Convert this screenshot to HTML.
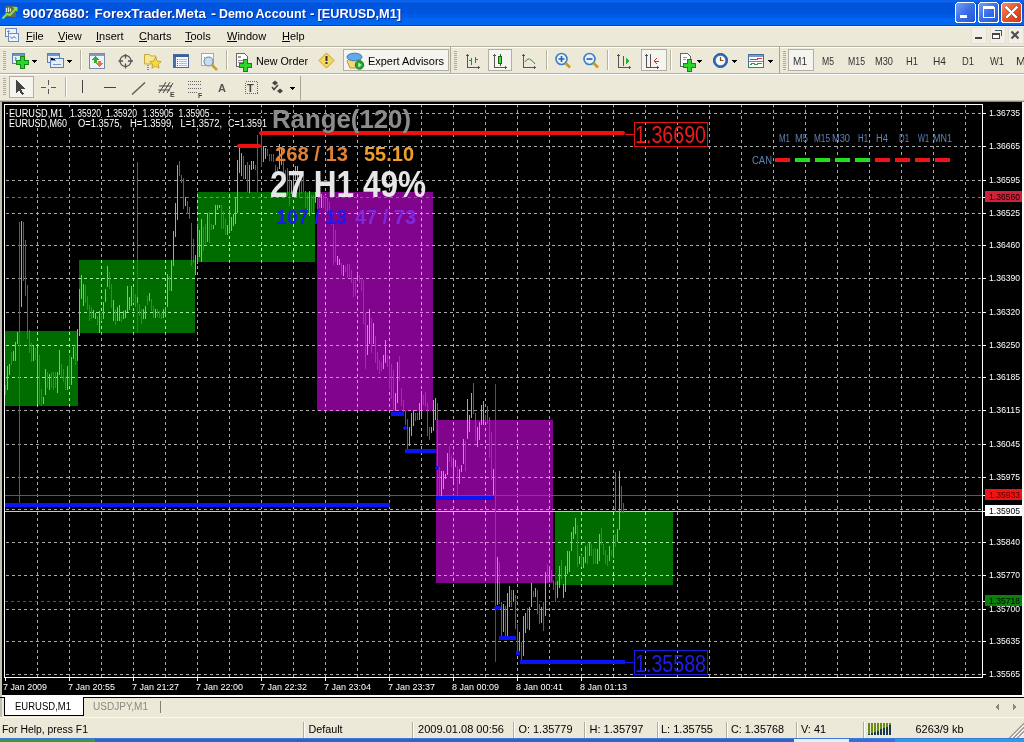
<!DOCTYPE html><html><head><meta charset="utf-8"><style>
html,body{margin:0;padding:0;width:1024px;height:742px;overflow:hidden;background:#ECE9D8}
svg{display:block;will-change:transform} text{font-family:"Liberation Sans",sans-serif}
</style></head><body><svg width="1024" height="742" viewBox="0 0 1024 742" shape-rendering="crispEdges">
<rect x="0" y="0" width="1024" height="742" fill="#ECE9D8" />
<defs>
<linearGradient id="tb" x1="0" y1="0" x2="0" y2="1">
<stop offset="0" stop-color="#0997FF"/><stop offset="0.12" stop-color="#0053EE"/>
<stop offset="0.5" stop-color="#0050EE"/><stop offset="0.85" stop-color="#0062F7"/>
<stop offset="1" stop-color="#0046C8"/></linearGradient>
<linearGradient id="btnb" x1="0" y1="0" x2="1" y2="1">
<stop offset="0" stop-color="#7BA4F5"/><stop offset="0.5" stop-color="#3A6EE8"/><stop offset="1" stop-color="#2456D4"/></linearGradient>
<linearGradient id="btnr" x1="0" y1="0" x2="1" y2="1">
<stop offset="0" stop-color="#F3926E"/><stop offset="0.5" stop-color="#E5542C"/><stop offset="1" stop-color="#C63A17"/></linearGradient>
</defs>
<rect x="0" y="0" width="1024" height="2" fill="#0A64EC" />
<rect x="0" y="2" width="1024" height="1" fill="#085CE4" />
<rect x="0" y="3" width="1024" height="11" fill="#0054DC" />
<rect x="0" y="14" width="1024" height="4" fill="#005CE8" />
<rect x="0" y="18" width="1024" height="7" fill="#0066F0" />
<rect x="0" y="25" width="1024" height="1" fill="#0040B8" />
<rect x="0" y="26" width="1024" height="1" fill="#F4F4FC" />
<g shape-rendering="auto"><rect x="5" y="6" width="11" height="11" fill="#6A7040" opacity="0.85"/><path d="M6.5 8v4 M8.5 7.5v4.5 M10.5 8.5v3" stroke="#E8E8D8" stroke-width="1.2"/><path d="M2.5 18.5 L7 14 L10 15 L16 8.5" stroke="#8CE03A" stroke-width="2" fill="none"/><path d="M12.5 7 L17.5 7 L17.5 12z" fill="#8CE03A"/></g>
<text x="23.5" y="19" font-size="13" fill="#0A2A9A" font-weight="bold" textLength="67.0" lengthAdjust="spacingAndGlyphs" >90078680:</text>
<text x="22.5" y="18" font-size="13" fill="#FFFFFF" font-weight="bold" textLength="67.0" lengthAdjust="spacingAndGlyphs" >90078680:</text>
<text x="95.5" y="19" font-size="13" fill="#0A2A9A" font-weight="bold" textLength="111.5" lengthAdjust="spacingAndGlyphs" >ForexTrader.Meta</text>
<text x="94.5" y="18" font-size="13" fill="#FFFFFF" font-weight="bold" textLength="111.5" lengthAdjust="spacingAndGlyphs" >ForexTrader.Meta</text>
<text x="212" y="19" font-size="13" fill="#0A2A9A" font-weight="bold" textLength="5" lengthAdjust="spacingAndGlyphs" >-</text>
<text x="211" y="18" font-size="13" fill="#FFFFFF" font-weight="bold" textLength="5" lengthAdjust="spacingAndGlyphs" >-</text>
<text x="220" y="19" font-size="13" fill="#0A2A9A" font-weight="bold" textLength="34.5" lengthAdjust="spacingAndGlyphs" >Demo</text>
<text x="219" y="18" font-size="13" fill="#FFFFFF" font-weight="bold" textLength="34.5" lengthAdjust="spacingAndGlyphs" >Demo</text>
<text x="256.5" y="19" font-size="13" fill="#0A2A9A" font-weight="bold" textLength="50.5" lengthAdjust="spacingAndGlyphs" >Account</text>
<text x="255.5" y="18" font-size="13" fill="#FFFFFF" font-weight="bold" textLength="50.5" lengthAdjust="spacingAndGlyphs" >Account</text>
<text x="311" y="19" font-size="13" fill="#0A2A9A" font-weight="bold" textLength="4.5" lengthAdjust="spacingAndGlyphs" >-</text>
<text x="310" y="18" font-size="13" fill="#FFFFFF" font-weight="bold" textLength="4.5" lengthAdjust="spacingAndGlyphs" >-</text>
<text x="318.5" y="19" font-size="13" fill="#0A2A9A" font-weight="bold" textLength="83.5" lengthAdjust="spacingAndGlyphs" >[EURUSD,M1]</text>
<text x="317.5" y="18" font-size="13" fill="#FFFFFF" font-weight="bold" textLength="83.5" lengthAdjust="spacingAndGlyphs" >[EURUSD,M1]</text>
<rect x="955.5" y="2.5" width="20" height="20" rx="3" fill="url(#btnb)" stroke="#FFFFFF" stroke-width="1"/>
<rect x="978.5" y="2.5" width="20" height="20" rx="3" fill="url(#btnb)" stroke="#FFFFFF" stroke-width="1"/>
<rect x="1001.5" y="2.5" width="20" height="20" rx="3" fill="url(#btnr)" stroke="#FFFFFF" stroke-width="1"/>
<rect x="960" y="15" width="7" height="3" fill="#fff"/>
<rect x="983" y="7" width="11" height="10" fill="none" stroke="#fff" stroke-width="1"/><rect x="983" y="6" width="11" height="3" fill="#fff"/>
<path d="M1006 7 L1017 18 M1017 7 L1006 18" stroke="#fff" stroke-width="2.2"/>
<g><rect x="5.5" y="28.5" width="11" height="8" fill="#EEF4FC" stroke="#6B8CC2"/><rect x="8.5" y="33.5" width="10" height="8" fill="#EEF4FC" stroke="#6B8CC2"/><path d="M10 36.5 l2 2 l2 -2 l2 2" stroke="#4A6AA2" fill="none" shape-rendering="auto"/><path d="M7 31.5 h3 M8 30 v3" stroke="#7A94C0"/></g>
<text x="26" y="40" font-size="11" fill="#000" font-weight="normal" >File</text>
<text x="58" y="40" font-size="11" fill="#000" font-weight="normal" >View</text>
<text x="96" y="40" font-size="11" fill="#000" font-weight="normal" >Insert</text>
<text x="139" y="40" font-size="11" fill="#000" font-weight="normal" >Charts</text>
<text x="185" y="40" font-size="11" fill="#000" font-weight="normal" >Tools</text>
<text x="227" y="40" font-size="11" fill="#000" font-weight="normal" >Window</text>
<text x="282" y="40" font-size="11" fill="#000" font-weight="normal" >Help</text>
<rect x="26" y="41" width="7" height="1" fill="#000" />
<rect x="58" y="41" width="7" height="1" fill="#000" />
<rect x="96" y="41" width="5" height="1" fill="#000" />
<rect x="139" y="41" width="8" height="1" fill="#000" />
<rect x="185" y="41" width="7" height="1" fill="#000" />
<rect x="227" y="41" width="10" height="1" fill="#000" />
<rect x="282" y="41" width="8" height="1" fill="#000" />
<rect x="971.5" y="27.5" width="15" height="16" fill="#F1EFE6" stroke="#E4E1D2"/>
<rect x="990.5" y="27.5" width="15" height="16" fill="#F1EFE6" stroke="#E4E1D2"/>
<rect x="1008.5" y="27.5" width="15" height="16" fill="#F1EFE6" stroke="#E4E1D2"/>
<rect x="975" y="37" width="7" height="2" fill="#444"/>
<path d="M994.5 30.5h7v5" stroke="#3A5A6A" fill="none" stroke-width="1.2"/><rect x="992.5" y="33.5" width="7" height="5" fill="#FFF" stroke="#444"/><rect x="992" y="33" width="8" height="2" fill="#444"/>
<path d="M1011.5 31.5 l7 7 M1018.5 31.5 l-7 7" stroke="#505050" stroke-width="2.2" shape-rendering="auto"/>
<rect x="0" y="46" width="1024" height="1" fill="#B5B2A4" />
<rect x="0" y="47" width="1024" height="1" fill="#FFFFFF" />
<rect x="0" y="73" width="1024" height="1" fill="#B5B2A4" />
<rect x="0" y="74" width="1024" height="1" fill="#FFFFFF" />
<rect x="0" y="100" width="1024" height="1" fill="#C8C5B6" />
<rect x="0" y="101" width="1024" height="1" fill="#8C8A7E" />
<rect x="3" y="51" width="3" height="1" fill="#B0AC9C" />
<rect x="3" y="53" width="3" height="1" fill="#B0AC9C" />
<rect x="3" y="55" width="3" height="1" fill="#B0AC9C" />
<rect x="3" y="57" width="3" height="1" fill="#B0AC9C" />
<rect x="3" y="59" width="3" height="1" fill="#B0AC9C" />
<rect x="3" y="61" width="3" height="1" fill="#B0AC9C" />
<rect x="3" y="63" width="3" height="1" fill="#B0AC9C" />
<rect x="3" y="65" width="3" height="1" fill="#B0AC9C" />
<rect x="3" y="67" width="3" height="1" fill="#B0AC9C" />
<rect x="3" y="69" width="3" height="1" fill="#B0AC9C" />
<g><rect x="12.5" y="53.5" width="12" height="10" fill="#E6EEF8" stroke="#5A7FB8"/><rect x="13" y="54" width="11" height="2" fill="#6F93C8"/><path d="M15.5 57 v4 M14.5 58 h2" stroke="#7A94C0"/></g><path d="M20.5 56.5 h4 v4 h4 v4 h-4 v4 h-4 v-4 h-4 v-4 h4 z" fill="#2FD22F" stroke="#118A11"/>
<path d="M32 60 h5 l-2.5 3 z" fill="#000"/>
<g><rect x="47.5" y="53.5" width="12" height="9" fill="#E6EEF8" stroke="#5A7FB8"/><rect x="48" y="54" width="11" height="2" fill="#6F93C8"/><rect x="50.5" y="58.5" width="13" height="9" fill="#E6EEF8" stroke="#5A7FB8"/><path d="M50 57 v3 h6 M53 64 h8" stroke="#7A94C0"/></g>
<path d="M67 60 h5 l-2.5 3 z" fill="#000"/>
<rect x="80" y="50" width="1" height="20" fill="#B5B2A4" />
<rect x="81" y="50" width="1" height="20" fill="#FFFFFF" />
<g><rect x="89.5" y="53.5" width="15" height="15" fill="#EEF3FA" stroke="#7A8AA8"/><rect x="90" y="54" width="14" height="2" fill="#8A9AB8"/><path d="M95 56 l4 4 h-2.5 v2.5 h-3 v-2.5 h-2.5 z" fill="#2FAF2F"/><path d="M99 67 l4 -4 h-2.5 v-2.5 h-3 v2.5 h-2.5 z" fill="#E8743A"/></g>
<g stroke="#555" fill="none" stroke-width="1.3" shape-rendering="auto"><circle cx="125.5" cy="61" r="5.5"/><path d="M125.5 54 v4.5 M125.5 63.5 v5 M118.5 61 h4.5 M128 61 h5"/></g>
<g shape-rendering="auto"><path d="M144.5 54.5 h5 l1.5 1.5 h5 v8 h-11.5 z" fill="#F7E690" stroke="#C9A640"/><path d="M155.5 57.5 l1.8 3.6 3.9 .5 -2.9 2.7 .8 3.9 -3.6 -2 -3.6 2 .8 -3.9 -2.9 -2.7 3.9 -.5z" fill="#F7DA40" stroke="#B89A20" stroke-width=".8"/><path d="M148 65 v5" stroke="#333" stroke-dasharray="1 1"/></g>
<g><rect x="173.5" y="54.5" width="15" height="13" fill="#F6F9FF" stroke="#4A6A9A"/><rect x="174" y="55" width="14" height="2" fill="#3A5F9F"/><rect x="174" y="57" width="2" height="10" fill="#4A6FAF"/><path d="M177 59h1M177 61h1M177 63h1M177 65h1" stroke="#C03030"/><path d="M179 59h8M179 61h8M179 63h8M179 65h8" stroke="#A8C0E8"/></g>
<g shape-rendering="auto"><rect x="201.5" y="53.5" width="12" height="12" fill="#FFFFFF" stroke="#A8A8A8"/><path d="M204 57 l3 3 3 -3" stroke="#7090B0" fill="none"/><circle cx="208.5" cy="61.5" r="4.5" fill="#C8DCF0" stroke="#6F8FB0" stroke-width="1.2"/><path d="M212 65 l5 5" stroke="#C8A030" stroke-width="2.5"/></g>
<rect x="226" y="50" width="1" height="20" fill="#B5B2A4" />
<rect x="227" y="50" width="1" height="20" fill="#FFFFFF" />
<g><path d="M236.5 53.5 h8 l3 3 v10 h-11 z" fill="#FFFFFF" stroke="#666"/><path d="M238 56 h3 v2 h-3z" fill="#999"/><path d="M238 60 h6 M238 62 h5" stroke="#888"/></g><path d="M243.5 59.5 h4 v4 h4 v4 h-4 v4 h-4 v-4 h-4 v-4 h4 z" fill="#2FD22F" stroke="#118A11"/>
<text x="256" y="65" font-size="11" fill="#000" font-weight="normal" textLength="52" lengthAdjust="spacingAndGlyphs" >New Order</text>
<g shape-rendering="auto"><path d="M326.5 53 l7.5 7.5 -7.5 7.5 -7.5 -7.5 z" fill="#F8DA5A" stroke="#C89A35"/><rect x="325.5" y="56" width="2" height="5" fill="#333"/><rect x="325.5" y="62" width="2" height="2" fill="#333"/></g>
<rect x="343" y="49" width="106" height="22" fill="#F5F4EF" />
<rect x="343.5" y="49.5" width="105" height="21" fill="none" stroke="#B3B0A3"/>
<g shape-rendering="auto"><path d="M347 61 l3 -3 h9 l2 3 -2 7 h-9 z" fill="#F2DA70" stroke="#A8955A"/><ellipse cx="354.5" cy="57" rx="7.5" ry="3.8" fill="#62AAE8" stroke="#3C78B8"/><circle cx="359.5" cy="65" r="4.2" fill="#22A832" stroke="#117A1D"/><path d="M358.3 62.6 l3.4 2.4 -3.4 2.4z" fill="#BFF0BF"/></g>
<text x="368" y="65" font-size="11" fill="#000" font-weight="normal" textLength="76" lengthAdjust="spacingAndGlyphs" >Expert Advisors</text>
<rect x="450" y="47" width="1" height="26" fill="#A8A596" />
<rect x="454" y="51" width="3" height="1" fill="#B0AC9C" />
<rect x="454" y="53" width="3" height="1" fill="#B0AC9C" />
<rect x="454" y="55" width="3" height="1" fill="#B0AC9C" />
<rect x="454" y="57" width="3" height="1" fill="#B0AC9C" />
<rect x="454" y="59" width="3" height="1" fill="#B0AC9C" />
<rect x="454" y="61" width="3" height="1" fill="#B0AC9C" />
<rect x="454" y="63" width="3" height="1" fill="#B0AC9C" />
<rect x="454" y="65" width="3" height="1" fill="#B0AC9C" />
<rect x="454" y="67" width="3" height="1" fill="#B0AC9C" />
<rect x="454" y="69" width="3" height="1" fill="#B0AC9C" />
<g><path d="M467.5 54 v13.5 h12" stroke="#555" fill="none"/><path d="M466 55.5 l1.5 -2 1.5 2z M478 66 l2 1.5 -2 1.5z" fill="#555"/><path d="M471.5 58 v7 M469 60 h2.5 M475.5 57 v6 M475.5 59 h2" stroke="#2A8A2A" fill="none"/></g>
<rect x="488" y="49" width="24" height="22" fill="#F5F4EF" />
<rect x="488.5" y="49.5" width="23" height="21" fill="none" stroke="#B3B0A3"/>
<g><path d="M494.5 54 v13.5 h12" stroke="#555" fill="none"/><path d="M493 55.5 l1.5 -2 1.5 2z M505 66 l2 1.5 -2 1.5z" fill="#555"/><rect x="498.5" y="56.5" width="3" height="7" fill="#3EE03E" stroke="#206020"/><path d="M500 54 v2 M500 64 v2" stroke="#206020"/></g>
<g><path d="M523.5 54 v13.5 h12" stroke="#555" fill="none"/><path d="M522 55.5 l1.5 -2 1.5 2z M534 66 l2 1.5 -2 1.5z" fill="#555"/><path d="M525 62 q3 -5 6 -2 q3 2 4 4" stroke="#3A8A3A" fill="none" shape-rendering="auto"/></g>
<rect x="546" y="50" width="1" height="20" fill="#B5B2A4" />
<rect x="547" y="50" width="1" height="20" fill="#FFFFFF" />
<g shape-rendering="auto"><circle cx="561.5" cy="59" r="5.5" fill="#E6F3FF" stroke="#3C7FC8" stroke-width="1.6"/><path d="M558.5 59 h6 M561.5 56 v6" stroke="#2A5FA8" stroke-width="1.6"/><path d="M565.5 63 l4.5 4.5" stroke="#C99A20" stroke-width="2.6"/></g>
<g shape-rendering="auto"><circle cx="589.5" cy="59" r="5.5" fill="#E6F3FF" stroke="#3C7FC8" stroke-width="1.6"/><path d="M586.5 59 h6" stroke="#2A5FA8" stroke-width="1.6"/><path d="M593.5 63 l4.5 4.5" stroke="#C99A20" stroke-width="2.6"/></g>
<rect x="607" y="50" width="1" height="20" fill="#B5B2A4" />
<rect x="608" y="50" width="1" height="20" fill="#FFFFFF" />
<g><path d="M618.5 54 v13.5 h12" stroke="#555" fill="none"/><path d="M617 55.5 l1.5 -2 1.5 2z M629 66 l2 1.5 -2 1.5z" fill="#555"/><path d="M623.5 56 v10" stroke="#555"/><path d="M626 58 l4 3 -4 3z" fill="#2CB02C"/></g>
<rect x="641" y="49" width="26" height="22" fill="#F5F4EF" />
<rect x="641.5" y="49.5" width="25" height="21" fill="none" stroke="#B3B0A3"/>
<g><path d="M646.5 54 v13.5 h12" stroke="#555" fill="none"/><path d="M645 55.5 l1.5 -2 1.5 2z M657 66 l2 1.5 -2 1.5z" fill="#555"/><path d="M650.5 54 v13" stroke="#555"/><path d="M655 61 h4 M657 58 l-3 3 3 3" stroke="#C33" fill="none"/></g>
<rect x="670" y="50" width="1" height="20" fill="#B5B2A4" />
<rect x="671" y="50" width="1" height="20" fill="#FFFFFF" />
<g><path d="M680.5 53.5 h7 l3 3 v10 h-10 z" fill="#FFFFFF" stroke="#666"/><path d="M683 57 h4 M683 59 h3" stroke="#999"/></g><path d="M687.5 59.5 h4 v4 h4 v4 h-4 v4 h-4 v-4 h-4 v-4 h4 z" fill="#2FD22F" stroke="#118A11"/>
<path d="M697 60 h5 l-2.5 3 z" fill="#000"/>
<g shape-rendering="auto"><circle cx="720.5" cy="60.5" r="7" fill="#2F6FC0" stroke="#1D4E91"/><circle cx="720.5" cy="60.5" r="4.8" fill="#F4F8FF"/><path d="M720.5 57 v3.5 h3" stroke="#8A4A10" fill="none" stroke-width="1.2"/></g>
<path d="M732 60 h5 l-2.5 3 z" fill="#000"/>
<g><rect x="748.5" y="54.5" width="15" height="13" fill="#FFFFFF" stroke="#4A6A9A"/><rect x="749" y="55" width="14" height="2" fill="#7A9AC8"/><path d="M749 61.5 h14" stroke="#6A8AB8"/><path d="M750 60 l3 -1 3 1 3 -2 3 1" stroke="#C04040" fill="none"/><path d="M750 65 l3 -2 3 2 3 -2 3 1" stroke="#30A030" fill="none"/></g>
<path d="M768 60 h5 l-2.5 3 z" fill="#000"/>
<rect x="779" y="47" width="1" height="26" fill="#A8A596" />
<rect x="783" y="51" width="3" height="1" fill="#B0AC9C" />
<rect x="783" y="53" width="3" height="1" fill="#B0AC9C" />
<rect x="783" y="55" width="3" height="1" fill="#B0AC9C" />
<rect x="783" y="57" width="3" height="1" fill="#B0AC9C" />
<rect x="783" y="59" width="3" height="1" fill="#B0AC9C" />
<rect x="783" y="61" width="3" height="1" fill="#B0AC9C" />
<rect x="783" y="63" width="3" height="1" fill="#B0AC9C" />
<rect x="783" y="65" width="3" height="1" fill="#B0AC9C" />
<rect x="783" y="67" width="3" height="1" fill="#B0AC9C" />
<rect x="783" y="69" width="3" height="1" fill="#B0AC9C" />
<rect x="788" y="49" width="26" height="22" fill="#F5F4EF" />
<rect x="788.5" y="49.5" width="25" height="21" fill="none" stroke="#B3B0A3"/>
<text x="793" y="65" font-size="11" fill="#333" font-weight="normal" textLength="14" lengthAdjust="spacingAndGlyphs" >M1</text>
<text x="822" y="65" font-size="11" fill="#333" font-weight="normal" textLength="12" lengthAdjust="spacingAndGlyphs" >M5</text>
<text x="848" y="65" font-size="11" fill="#333" font-weight="normal" textLength="17" lengthAdjust="spacingAndGlyphs" >M15</text>
<text x="875" y="65" font-size="11" fill="#333" font-weight="normal" textLength="18" lengthAdjust="spacingAndGlyphs" >M30</text>
<text x="906" y="65" font-size="11" fill="#333" font-weight="normal" textLength="12" lengthAdjust="spacingAndGlyphs" >H1</text>
<text x="933" y="65" font-size="11" fill="#333" font-weight="normal" textLength="13" lengthAdjust="spacingAndGlyphs" >H4</text>
<text x="962" y="65" font-size="11" fill="#333" font-weight="normal" textLength="12" lengthAdjust="spacingAndGlyphs" >D1</text>
<text x="990" y="65" font-size="11" fill="#333" font-weight="normal" textLength="14" lengthAdjust="spacingAndGlyphs" >W1</text>
<text x="1016" y="65" font-size="11" fill="#333" font-weight="normal" textLength="18" lengthAdjust="spacingAndGlyphs" >MN</text>
<rect x="3" y="78" width="3" height="1" fill="#B0AC9C" />
<rect x="3" y="80" width="3" height="1" fill="#B0AC9C" />
<rect x="3" y="82" width="3" height="1" fill="#B0AC9C" />
<rect x="3" y="84" width="3" height="1" fill="#B0AC9C" />
<rect x="3" y="86" width="3" height="1" fill="#B0AC9C" />
<rect x="3" y="88" width="3" height="1" fill="#B0AC9C" />
<rect x="3" y="90" width="3" height="1" fill="#B0AC9C" />
<rect x="3" y="92" width="3" height="1" fill="#B0AC9C" />
<rect x="3" y="94" width="3" height="1" fill="#B0AC9C" />
<rect x="9" y="76" width="25" height="22" fill="#F5F4EF" />
<rect x="9.5" y="76.5" width="24" height="21" fill="none" stroke="#B3B0A3"/>
<path d="M16 79 v14 l3 -3 l3 5 l2 -1 l-3 -5 h4 z" fill="#444"/>
<path d="M48.5 80 v5 M48.5 89 v5 M41 87.5 h5 M51 87.5 h5" stroke="#555"/>
<rect x="65" y="77" width="1" height="20" fill="#B5B2A4" />
<rect x="66" y="77" width="1" height="20" fill="#FFFFFF" />
<path d="M82.5 80 v13" stroke="#444" stroke-width="1.2"/>
<path d="M104 87.5 h12" stroke="#444" stroke-width="1.2"/>
<path d="M132 94.5 l13 -12" stroke="#555" stroke-width="1.3" shape-rendering="auto"/>
<g stroke="#444" fill="none" shape-rendering="auto"><path d="M159 93 l7 -11 M163 93 l7 -11 M167 93 l6 -10 M158 90 h12 M159 86 h13"/></g>
<text x="170" y="97" font-size="7" fill="#444" font-weight="bold" >E</text>
<g stroke="#666" stroke-dasharray="1 1"><path d="M188 81.5 h14 M188 84.5 h14 M188 88.5 h14 M188 92.5 h10"/></g>
<text x="198" y="98" font-size="7" fill="#444" font-weight="bold" >F</text>
<text x="218" y="92" font-size="11" fill="#555" font-weight="bold" >A</text>
<rect x="245.5" y="81.5" width="12" height="12" fill="none" stroke="#666" stroke-dasharray="1 1"/>
<text x="247" y="92" font-size="11" fill="#444" font-weight="bold" >T</text>
<g fill="#444" shape-rendering="auto"><path d="M272 83 l3 -2.5 3 2.5 -3 2.5z M277 91 l3 -2.5 3 2.5 -3 2.5z"/><path d="M272 87 l2 2.5 4 -4.5" stroke="#444" fill="none" stroke-width="1.6"/></g>
<path d="M290 87 h5 l-2.5 3 z" fill="#000"/>
<rect x="300" y="76" width="1" height="24" fill="#A8A596" />
<rect x="2" y="102" width="1020" height="593" fill="#000000" />
<rect x="0" y="102" width="2" height="615" fill="#C2C0B2" />
<rect x="1022" y="102" width="2" height="595" fill="#F8F8F4" />
<rect x="5" y="331" width="73" height="75" fill="#006C00" />
<rect x="79" y="260" width="116" height="73" fill="#006C00" />
<rect x="197" y="192" width="118" height="70" fill="#006C00" />
<rect x="317" y="192" width="116" height="219" fill="#80058C" />
<rect x="436" y="420" width="117" height="163" fill="#80058C" />
<rect x="555" y="511" width="118" height="74" fill="#006C00" />
<path d="M6 113.5H981 M6 146.5H981 M6 180.5H981 M6 213.5H981 M6 245.5H981 M6 278.5H981 M6 312.5H981 M6 345.5H981 M6 377.5H981 M6 410.5H981 M6 444.5H981 M6 477.5H981 M6 509.5H981 M6 542.5H981 M6 575.5H981 M6 609.5H981 M6 641.5H981 M6 674.5H981 M37.5 104V677 M69.5 104V677 M101.5 104V677 M133.5 104V677 M165.5 104V677 M197.5 104V677 M229.5 104V677 M261.5 104V677 M293.5 104V677 M325.5 104V677 M357.5 104V677 M389.5 104V677 M421.5 104V677 M453.5 104V677 M485.5 104V677 M517.5 104V677 M549.5 104V677 M581.5 104V677 M613.5 104V677 M645.5 104V677 M677.5 104V677 M709.5 104V677 M741.5 104V677 M773.5 104V677 M805.5 104V677 M837.5 104V677 M869.5 104V677 M901.5 104V677 M933.5 104V677 M965.5 104V677" stroke="#A8A8A8" stroke-width="1" stroke-dasharray="3 3" fill="none"/>
<clipPath id="pur"><rect x="317" y="192" width="116" height="219"/><rect x="436" y="420" width="117" height="163"/></clipPath>
<path d="M37.5 104V677 M69.5 104V677 M101.5 104V677 M133.5 104V677 M165.5 104V677 M197.5 104V677 M229.5 104V677 M261.5 104V677 M293.5 104V677 M325.5 104V677 M357.5 104V677 M389.5 104V677 M421.5 104V677 M453.5 104V677 M485.5 104V677 M517.5 104V677 M549.5 104V677 M581.5 104V677 M613.5 104V677 M645.5 104V677 M677.5 104V677 M709.5 104V677 M741.5 104V677 M773.5 104V677 M805.5 104V677 M837.5 104V677 M869.5 104V677 M901.5 104V677 M933.5 104V677 M965.5 104V677" stroke="#9A1050" stroke-width="1" fill="none" clip-path="url(#pur)"/>
<path d="M6 113.5H981 M6 146.5H981 M6 180.5H981 M6 213.5H981 M6 245.5H981 M6 278.5H981 M6 312.5H981 M6 345.5H981 M6 377.5H981 M6 410.5H981 M6 444.5H981 M6 477.5H981 M6 509.5H981 M6 542.5H981 M6 575.5H981 M6 609.5H981 M6 641.5H981 M6 674.5H981" stroke="#E080E0" stroke-width="1" stroke-dasharray="3 3" fill="none" clip-path="url(#pur)"/>
<path d="M37.5 104V677 M69.5 104V677 M101.5 104V677 M133.5 104V677 M165.5 104V677 M197.5 104V677 M229.5 104V677 M261.5 104V677 M293.5 104V677 M325.5 104V677 M357.5 104V677 M389.5 104V677 M421.5 104V677 M453.5 104V677 M485.5 104V677 M517.5 104V677 M549.5 104V677 M581.5 104V677 M613.5 104V677 M645.5 104V677 M677.5 104V677 M709.5 104V677 M741.5 104V677 M773.5 104V677 M805.5 104V677 M837.5 104V677 M869.5 104V677 M901.5 104V677 M933.5 104V677 M965.5 104V677" stroke="#F498C8" stroke-width="1" stroke-dasharray="3 3" fill="none" clip-path="url(#pur)"/>
<clipPath id="grn0"><rect x="5" y="331" width="73" height="75"/><rect x="79" y="260" width="116" height="73"/><rect x="197" y="192" width="118" height="70"/><rect x="555" y="512" width="118" height="73"/></clipPath>
<path d="M6 113.5H981 M6 146.5H981 M6 180.5H981 M6 213.5H981 M6 245.5H981 M6 278.5H981 M6 312.5H981 M6 345.5H981 M6 377.5H981 M6 410.5H981 M6 444.5H981 M6 477.5H981 M6 509.5H981 M6 542.5H981 M6 575.5H981 M6 609.5H981 M6 641.5H981 M6 674.5H981 M37.5 104V677 M69.5 104V677 M101.5 104V677 M133.5 104V677 M165.5 104V677 M197.5 104V677 M229.5 104V677 M261.5 104V677 M293.5 104V677 M325.5 104V677 M357.5 104V677 M389.5 104V677 M421.5 104V677 M453.5 104V677 M485.5 104V677 M517.5 104V677 M549.5 104V677 M581.5 104V677 M613.5 104V677 M645.5 104V677 M677.5 104V677 M709.5 104V677 M741.5 104V677 M773.5 104V677 M805.5 104V677 M837.5 104V677 M869.5 104V677 M901.5 104V677 M933.5 104V677 M965.5 104V677" stroke="#A0F0A0" stroke-width="1" stroke-dasharray="3 3" fill="none" clip-path="url(#grn0)"/>
<path d="M6 197.5H981" stroke="#B84A6C" stroke-width="1" stroke-dasharray="3 3"/>
<path d="M6 197.5H981" stroke="#C87040" stroke-width="1" stroke-dasharray="3 3" clip-path="url(#grn0)"/>
<path d="M5 601.5H981" stroke="#1E7A1E" stroke-width="1" stroke-dasharray="3 3"/>
<rect x="5" y="495" width="977" height="1" fill="#D02828" />
<rect x="5" y="511" width="977" height="1" fill="#C8C8C8" />
<rect x="19" y="222" width="1" height="281" fill="#208A20" />
<rect x="137" y="162" width="1" height="171" fill="#208A20" />
<rect x="257" y="135" width="1" height="57" fill="#208A20" />
<rect x="495" y="384" width="1" height="278" fill="#84308A" />
<rect x="615" y="472" width="1" height="40" fill="#2A9A2A" />
<path d="M7.5 366V390 M9.5 364V375 M13.5 351V361 M15.5 342V361 M17.5 332V344 M21.5 221V307 M33.5 345V361 M37.5 347V404 M43.5 397V404 M45.5 369V395 M49.5 374V390 M57.5 372V393 M59.5 350V375 M67.5 366V390 M71.5 357V385 M73.5 347V359 M77.5 329V361 M79.5 289V336 M81.5 275V299 M83.5 284V306 M93.5 310V318 M95.5 313V319 M99.5 311V333 M103.5 302V319 M105.5 289V302 M107.5 266V287 M113.5 300V321 M117.5 307V321 M119.5 305V321 M123.5 311V319 M125.5 310V318 M127.5 286V312 M129.5 297V310 M131.5 286V306 M137.5 297V303 M143.5 309V319 M145.5 306V319 M149.5 293V301 M155.5 309V318 M163.5 309V318 M165.5 307V316 M167.5 274V307 M171.5 260V291 M173.5 231V266 M175.5 203V237 M177.5 165V220 M185.5 197V206 M195.5 255V275 M197.5 224V264 M199.5 230V257 M201.5 219V262 M207.5 213V242 M213.5 225V229 M215.5 205V225 M217.5 205V210 M219.5 205V208 M227.5 225V235 M229.5 210V232 M231.5 217V231 M233.5 214V226 M235.5 197V224 M237.5 160V213 M239.5 147V173 M241.5 153V176 M245.5 165V179 M249.5 165V193 M251.5 161V170 M253.5 161V169 M263.5 146V162 M265.5 148V159 M279.5 144V169 M281.5 148V165 M291.5 180V194 M293.5 174V192 M295.5 166V180 M297.5 166V185 M309.5 191V216 M315.5 192V203 M321.5 194V208 M337.5 256V265 M339.5 259V265 M343.5 265V276 M357.5 273V281 M367.5 325V355 M369.5 309V344 M373.5 323V344 M383.5 355V369 M385.5 340V363 M395.5 393V411 M397.5 362V403 M409.5 427V446 M411.5 413V436 M413.5 410V426 M419.5 403V420 M421.5 391V418 M431.5 427V433 M433.5 400V431 M435.5 398V420 M441.5 471V496 M443.5 471V489 M445.5 474V479 M447.5 453V475 M453.5 458V482 M455.5 460V467 M459.5 469V484 M461.5 465V472 M463.5 439V464 M467.5 399V439 M469.5 415V432 M471.5 393V418 M477.5 427V447 M479.5 422V440 M481.5 405V425 M483.5 401V425 M493.5 469V495 M497.5 557V605 M503.5 604V632 M507.5 593V637 M509.5 586V607 M513.5 590V602 M519.5 632V651 M523.5 616V656 M525.5 613V633 M529.5 607V630 M531.5 583V607 M535.5 588V597 M541.5 607V623 M545.5 572V616 M549.5 566V582 M557.5 581V598 M559.5 566V588 M563.5 584V598 M565.5 566V592 M567.5 551V574 M569.5 551V572 M571.5 532V551 M573.5 527V539 M575.5 518V534 M579.5 556V564 M583.5 557V568 M585.5 546V563 M589.5 542V556 M597.5 549V564 M599.5 534V561 M609.5 546V561 M613.5 535V558 M617.5 529V542 M619.5 471V530" stroke="#3EF03E" stroke-width="1" fill="none"/>
<path d="M5.5 385V395 M11.5 352V365 M23.5 222V281 M25.5 240V296 M27.5 285V339 M29.5 330V353 M31.5 343V362 M35.5 348V360 M39.5 355V404 M41.5 389V406 M47.5 372V388 M51.5 372V388 M53.5 372V390 M55.5 372V388 M61.5 364V378 M63.5 369V382 M65.5 377V390 M69.5 355V385 M75.5 345V365 M85.5 285V303 M87.5 296V310 M89.5 305V321 M91.5 307V319 M97.5 316V325 M101.5 313V321 M109.5 272V289 M111.5 284V308 M115.5 309V325 M121.5 315V322 M133.5 288V303 M135.5 294V307 M139.5 304V316 M141.5 309V324 M147.5 296V305 M151.5 299V311 M153.5 306V318 M157.5 309V317 M159.5 311V318 M161.5 313V319 M169.5 276V291 M179.5 161V176 M181.5 175V183 M183.5 178V209 M187.5 201V214 M189.5 207V219 M191.5 223V266 M193.5 239V263 M203.5 227V251 M205.5 224V244 M209.5 212V243 M211.5 224V230 M221.5 205V229 M223.5 211V229 M225.5 219V235 M243.5 156V179 M247.5 162V192 M255.5 165V170 M261.5 135V167 M267.5 149V156 M269.5 154V161 M271.5 154V161 M273.5 154V162 M275.5 165V172 M277.5 167V173 M283.5 161V176 M285.5 170V182 M287.5 168V196 M289.5 175V206 M299.5 173V198 M301.5 175V194 M303.5 175V192 M305.5 191V208 M307.5 193V215 M311.5 195V214 M313.5 195V213 M317.5 198V215 M319.5 194V208 M323.5 195V208 M325.5 195V211 M327.5 198V212 M329.5 202V213 M331.5 210V225 M333.5 223V265 M335.5 230V262 M341.5 263V275 M345.5 266V272 M347.5 264V278 M349.5 264V277 M351.5 270V283 M353.5 278V297 M355.5 280V296 M359.5 275V283 M361.5 278V291 M363.5 280V324 M365.5 313V369 M371.5 318V353 M375.5 336V363 M377.5 352V370 M379.5 360V374 M381.5 362V371 M387.5 355V367 M389.5 359V389 M391.5 364V399 M393.5 370V410 M399.5 356V381 M401.5 388V406 M403.5 400V412 M405.5 411V425 M407.5 419V450 M415.5 413V421 M417.5 413V420 M423.5 395V405 M425.5 392V406 M427.5 403V436 M429.5 427V440 M437.5 403V496 M439.5 467V496 M449.5 446V462 M451.5 455V467 M457.5 466V496 M465.5 441V471 M473.5 383V414 M475.5 413V441 M485.5 415V421 M487.5 406V424 M489.5 417V458 M491.5 432V480 M495.5 490V605 M499.5 562V604 M501.5 602V636 M505.5 606V636 M511.5 590V607 M515.5 595V629 M517.5 624V651 M521.5 642V663 M527.5 608V629 M533.5 591V597 M537.5 590V614 M539.5 604V624 M543.5 602V631 M547.5 564V583 M551.5 570V582 M553.5 580V590 M555.5 582V602 M561.5 560V579 M577.5 525V567 M581.5 555V567 M587.5 544V564 M591.5 544V556 M593.5 549V564 M595.5 548V564 M601.5 528V545 M603.5 544V555 M605.5 550V564 M607.5 555V566 M611.5 550V556 M615.5 534V547 M621.5 486V513 M623.5 503V513" stroke="#E02A1E" stroke-width="1" fill="none"/>
<clipPath id="grn"><rect x="5" y="331" width="73" height="75"/><rect x="79" y="260" width="116" height="73"/><rect x="197" y="192" width="118" height="70"/><rect x="555" y="512" width="118" height="73"/></clipPath>
<path d="M5.5 385V395 M11.5 352V365 M23.5 222V281 M25.5 240V296 M27.5 285V339 M29.5 330V353 M31.5 343V362 M35.5 348V360 M39.5 355V404 M41.5 389V406 M47.5 372V388 M51.5 372V388 M53.5 372V390 M55.5 372V388 M61.5 364V378 M63.5 369V382 M65.5 377V390 M69.5 355V385 M75.5 345V365 M85.5 285V303 M87.5 296V310 M89.5 305V321 M91.5 307V319 M97.5 316V325 M101.5 313V321 M109.5 272V289 M111.5 284V308 M115.5 309V325 M121.5 315V322 M133.5 288V303 M135.5 294V307 M139.5 304V316 M141.5 309V324 M147.5 296V305 M151.5 299V311 M153.5 306V318 M157.5 309V317 M159.5 311V318 M161.5 313V319 M169.5 276V291 M179.5 161V176 M181.5 175V183 M183.5 178V209 M187.5 201V214 M189.5 207V219 M191.5 223V266 M193.5 239V263 M203.5 227V251 M205.5 224V244 M209.5 212V243 M211.5 224V230 M221.5 205V229 M223.5 211V229 M225.5 219V235 M243.5 156V179 M247.5 162V192 M255.5 165V170 M261.5 135V167 M267.5 149V156 M269.5 154V161 M271.5 154V161 M273.5 154V162 M275.5 165V172 M277.5 167V173 M283.5 161V176 M285.5 170V182 M287.5 168V196 M289.5 175V206 M299.5 173V198 M301.5 175V194 M303.5 175V192 M305.5 191V208 M307.5 193V215 M311.5 195V214 M313.5 195V213 M317.5 198V215 M319.5 194V208 M323.5 195V208 M325.5 195V211 M327.5 198V212 M329.5 202V213 M331.5 210V225 M333.5 223V265 M335.5 230V262 M341.5 263V275 M345.5 266V272 M347.5 264V278 M349.5 264V277 M351.5 270V283 M353.5 278V297 M355.5 280V296 M359.5 275V283 M361.5 278V291 M363.5 280V324 M365.5 313V369 M371.5 318V353 M375.5 336V363 M377.5 352V370 M379.5 360V374 M381.5 362V371 M387.5 355V367 M389.5 359V389 M391.5 364V399 M393.5 370V410 M399.5 356V381 M401.5 388V406 M403.5 400V412 M405.5 411V425 M407.5 419V450 M415.5 413V421 M417.5 413V420 M423.5 395V405 M425.5 392V406 M427.5 403V436 M429.5 427V440 M437.5 403V496 M439.5 467V496 M449.5 446V462 M451.5 455V467 M457.5 466V496 M465.5 441V471 M473.5 383V414 M475.5 413V441 M485.5 415V421 M487.5 406V424 M489.5 417V458 M491.5 432V480 M495.5 490V605 M499.5 562V604 M501.5 602V636 M505.5 606V636 M511.5 590V607 M515.5 595V629 M517.5 624V651 M521.5 642V663 M527.5 608V629 M533.5 591V597 M537.5 590V614 M539.5 604V624 M543.5 602V631 M547.5 564V583 M551.5 570V582 M553.5 580V590 M555.5 582V602 M561.5 560V579 M577.5 525V567 M581.5 555V567 M587.5 544V564 M591.5 544V556 M593.5 549V564 M595.5 548V564 M601.5 528V545 M603.5 544V555 M605.5 550V564 M607.5 555V566 M611.5 550V556 M615.5 534V547 M621.5 486V513 M623.5 503V513" stroke="#C04A18" stroke-width="1" fill="none" clip-path="url(#grn)"/>
<rect x="4.5" y="104.5" width="978" height="573" fill="none" stroke="#FFFFFF" stroke-width="1"/>
<path d="M239 146H259" stroke="#F01010" stroke-width="4" stroke-linecap="round" shape-rendering="auto"/>
<path d="M261 133H623" stroke="#F01010" stroke-width="4" stroke-linecap="round" shape-rendering="auto"/>
<rect x="625" y="134" width="9" height="1" fill="#F01010" />
<rect x="5" y="503" width="385" height="4" fill="#0A14F5" />
<rect x="391" y="412" width="13" height="4" fill="#0A14F5" />
<rect x="405" y="449" width="31" height="4" fill="#0A14F5" />
<rect x="436" y="496" width="58" height="4" fill="#0A14F5" />
<rect x="499" y="636" width="17" height="4" fill="#0A14F5" />
<rect x="520" y="660" width="105" height="4" fill="#0A14F5" />
<rect x="625" y="662" width="9" height="1" fill="#0A14F5" />
<ellipse cx="405" cy="428" rx="1.8" ry="2" fill="#0A14F5"/>
<ellipse cx="437" cy="468" rx="1.8" ry="2" fill="#0A14F5"/>
<ellipse cx="497.5" cy="608" rx="3.5" ry="2" fill="#0A14F5"/>
<ellipse cx="518" cy="653" rx="2.5" ry="2" fill="#0A14F5"/>
<rect x="634.5" y="122.5" width="73" height="24" fill="none" stroke="#E01414"/>
<text x="635" y="143" font-size="23" fill="#F01818" font-weight="normal" textLength="71" lengthAdjust="spacingAndGlyphs" >1.36690</text>
<rect x="634.5" y="650.5" width="73" height="24" fill="none" stroke="#1A1AE0"/>
<text x="635" y="672" font-size="23" fill="#1E1EF0" font-weight="normal" textLength="71" lengthAdjust="spacingAndGlyphs" >1.35588</text>
<text x="272" y="128" font-size="25" fill="#8C8C8C" font-weight="bold" textLength="139" lengthAdjust="spacingAndGlyphs" >Range(120)</text>
<text x="275" y="161" font-size="20" fill="#E08034" font-weight="bold" textLength="73" lengthAdjust="spacingAndGlyphs" >268 / 13</text>
<text x="364" y="161" font-size="20" fill="#F0A028" font-weight="bold" textLength="50" lengthAdjust="spacingAndGlyphs" >55.10</text>
<text x="270" y="197" font-size="36" fill="#E6E6E6" font-weight="bold" textLength="156" lengthAdjust="spacingAndGlyphs" >27 H1 49%</text>
<text x="276" y="224" font-size="20" fill="#1A1AF0" font-weight="bold" textLength="71" lengthAdjust="spacingAndGlyphs" >107 / 13</text>
<text x="355" y="224" font-size="20" fill="#7F28E0" font-weight="bold" textLength="61" lengthAdjust="spacingAndGlyphs" >47 / 73</text>
<text x="779" y="142" font-size="10" fill="#5E82B4" font-weight="normal" textLength="11" lengthAdjust="spacingAndGlyphs" >M1</text>
<text x="795" y="142" font-size="10" fill="#5E82B4" font-weight="normal" textLength="13" lengthAdjust="spacingAndGlyphs" >M5</text>
<text x="814" y="142" font-size="10" fill="#5E82B4" font-weight="normal" textLength="16" lengthAdjust="spacingAndGlyphs" >M15</text>
<text x="832" y="142" font-size="10" fill="#5E82B4" font-weight="normal" textLength="18" lengthAdjust="spacingAndGlyphs" >M30</text>
<text x="858" y="142" font-size="10" fill="#5E82B4" font-weight="normal" textLength="10" lengthAdjust="spacingAndGlyphs" >H1</text>
<text x="876" y="142" font-size="10" fill="#5E82B4" font-weight="normal" textLength="12" lengthAdjust="spacingAndGlyphs" >H4</text>
<text x="899" y="142" font-size="10" fill="#5E82B4" font-weight="normal" textLength="10" lengthAdjust="spacingAndGlyphs" >D1</text>
<text x="918" y="142" font-size="10" fill="#5E82B4" font-weight="normal" textLength="11" lengthAdjust="spacingAndGlyphs" >W1</text>
<text x="933" y="142" font-size="10" fill="#5E82B4" font-weight="normal" textLength="19" lengthAdjust="spacingAndGlyphs" >MN1</text>
<text x="752" y="164" font-size="11" fill="#5E82B4" font-weight="normal" textLength="20" lengthAdjust="spacingAndGlyphs" >CAN</text>
<rect x="775" y="158" width="15" height="4" fill="#F01414" />
<rect x="795" y="158" width="15" height="4" fill="#20E020" />
<rect x="815" y="158" width="15" height="4" fill="#20E020" />
<rect x="835" y="158" width="15" height="4" fill="#20E020" />
<rect x="855" y="158" width="15" height="4" fill="#20E020" />
<rect x="875" y="158" width="15" height="4" fill="#F01414" />
<rect x="895" y="158" width="15" height="4" fill="#F01414" />
<rect x="915" y="158" width="15" height="4" fill="#F01414" />
<rect x="935" y="158" width="15" height="4" fill="#F01414" />
<rect x="8" y="108" width="203" height="9" fill="#000000" />
<rect x="8" y="118" width="260" height="9" fill="#000000" />
<text x="9" y="117" font-size="10" fill="#FFFFFF" font-weight="normal" textLength="54" lengthAdjust="spacingAndGlyphs" >EURUSD,M1</text>
<text x="70" y="117" font-size="10" fill="#FFFFFF" font-weight="normal" textLength="31" lengthAdjust="spacingAndGlyphs" >1.35920</text>
<text x="106" y="117" font-size="10" fill="#FFFFFF" font-weight="normal" textLength="31" lengthAdjust="spacingAndGlyphs" >1.35920</text>
<text x="142.5" y="117" font-size="10" fill="#FFFFFF" font-weight="normal" textLength="31" lengthAdjust="spacingAndGlyphs" >1.35905</text>
<text x="178.5" y="117" font-size="10" fill="#FFFFFF" font-weight="normal" textLength="31" lengthAdjust="spacingAndGlyphs" >1.35905</text>
<text x="9" y="127" font-size="10" fill="#FFFFFF" font-weight="normal" textLength="58" lengthAdjust="spacingAndGlyphs" >EURUSD,M60</text>
<text x="78" y="127" font-size="10" fill="#FFFFFF" font-weight="normal" textLength="44" lengthAdjust="spacingAndGlyphs" >O=1.3575,</text>
<text x="130" y="127" font-size="10" fill="#FFFFFF" font-weight="normal" textLength="44" lengthAdjust="spacingAndGlyphs" >H=1.3599,</text>
<text x="180.5" y="127" font-size="10" fill="#FFFFFF" font-weight="normal" textLength="41.5" lengthAdjust="spacingAndGlyphs" >L=1.3572,</text>
<text x="228" y="127" font-size="10" fill="#FFFFFF" font-weight="normal" textLength="39" lengthAdjust="spacingAndGlyphs" >C=1.3591</text>
<rect x="983" y="113" width="3" height="1" fill="#FFFFFF" />
<text x="989" y="116" font-size="9.6" fill="#FFFFFF" font-weight="normal" textLength="31" lengthAdjust="spacingAndGlyphs" >1.36735</text>
<rect x="983" y="146" width="3" height="1" fill="#FFFFFF" />
<text x="989" y="149" font-size="9.6" fill="#FFFFFF" font-weight="normal" textLength="31" lengthAdjust="spacingAndGlyphs" >1.36665</text>
<rect x="983" y="180" width="3" height="1" fill="#FFFFFF" />
<text x="989" y="183" font-size="9.6" fill="#FFFFFF" font-weight="normal" textLength="31" lengthAdjust="spacingAndGlyphs" >1.36595</text>
<rect x="983" y="213" width="3" height="1" fill="#FFFFFF" />
<text x="989" y="216" font-size="9.6" fill="#FFFFFF" font-weight="normal" textLength="31" lengthAdjust="spacingAndGlyphs" >1.36525</text>
<rect x="983" y="245" width="3" height="1" fill="#FFFFFF" />
<text x="989" y="248" font-size="9.6" fill="#FFFFFF" font-weight="normal" textLength="31" lengthAdjust="spacingAndGlyphs" >1.36460</text>
<rect x="983" y="278" width="3" height="1" fill="#FFFFFF" />
<text x="989" y="281" font-size="9.6" fill="#FFFFFF" font-weight="normal" textLength="31" lengthAdjust="spacingAndGlyphs" >1.36390</text>
<rect x="983" y="312" width="3" height="1" fill="#FFFFFF" />
<text x="989" y="315" font-size="9.6" fill="#FFFFFF" font-weight="normal" textLength="31" lengthAdjust="spacingAndGlyphs" >1.36320</text>
<rect x="983" y="345" width="3" height="1" fill="#FFFFFF" />
<text x="989" y="348" font-size="9.6" fill="#FFFFFF" font-weight="normal" textLength="31" lengthAdjust="spacingAndGlyphs" >1.36250</text>
<rect x="983" y="377" width="3" height="1" fill="#FFFFFF" />
<text x="989" y="380" font-size="9.6" fill="#FFFFFF" font-weight="normal" textLength="31" lengthAdjust="spacingAndGlyphs" >1.36185</text>
<rect x="983" y="410" width="3" height="1" fill="#FFFFFF" />
<text x="989" y="413" font-size="9.6" fill="#FFFFFF" font-weight="normal" textLength="31" lengthAdjust="spacingAndGlyphs" >1.36115</text>
<rect x="983" y="444" width="3" height="1" fill="#FFFFFF" />
<text x="989" y="447" font-size="9.6" fill="#FFFFFF" font-weight="normal" textLength="31" lengthAdjust="spacingAndGlyphs" >1.36045</text>
<rect x="983" y="477" width="3" height="1" fill="#FFFFFF" />
<text x="989" y="480" font-size="9.6" fill="#FFFFFF" font-weight="normal" textLength="31" lengthAdjust="spacingAndGlyphs" >1.35975</text>
<rect x="983" y="542" width="3" height="1" fill="#FFFFFF" />
<text x="989" y="545" font-size="9.6" fill="#FFFFFF" font-weight="normal" textLength="31" lengthAdjust="spacingAndGlyphs" >1.35840</text>
<rect x="983" y="575" width="3" height="1" fill="#FFFFFF" />
<text x="989" y="578" font-size="9.6" fill="#FFFFFF" font-weight="normal" textLength="31" lengthAdjust="spacingAndGlyphs" >1.35770</text>
<rect x="983" y="609" width="3" height="1" fill="#FFFFFF" />
<text x="989" y="612" font-size="9.6" fill="#FFFFFF" font-weight="normal" textLength="31" lengthAdjust="spacingAndGlyphs" >1.35700</text>
<rect x="983" y="641" width="3" height="1" fill="#FFFFFF" />
<text x="989" y="644" font-size="9.6" fill="#FFFFFF" font-weight="normal" textLength="31" lengthAdjust="spacingAndGlyphs" >1.35635</text>
<rect x="983" y="674" width="3" height="1" fill="#FFFFFF" />
<text x="989" y="677" font-size="9.6" fill="#FFFFFF" font-weight="normal" textLength="31" lengthAdjust="spacingAndGlyphs" >1.35565</text>
<rect x="983" y="197" width="2" height="1" fill="#FFFFFF" />
<rect x="985" y="191" width="37" height="11" fill="#D0203A" />
<text x="989" y="200" font-size="9.6" fill="#000000" font-weight="normal" textLength="31" lengthAdjust="spacingAndGlyphs" >1.36560</text>
<rect x="983" y="495" width="2" height="1" fill="#FFFFFF" />
<rect x="985" y="489" width="37" height="11" fill="#F01414" />
<text x="989" y="498" font-size="9.6" fill="#500000" font-weight="normal" textLength="31" lengthAdjust="spacingAndGlyphs" >1.35933</text>
<rect x="983" y="511" width="2" height="1" fill="#FFFFFF" />
<rect x="985" y="505" width="37" height="11" fill="#FFFFFF" />
<text x="989" y="514" font-size="9.6" fill="#000000" font-weight="normal" textLength="31" lengthAdjust="spacingAndGlyphs" >1.35905</text>
<rect x="983" y="601" width="2" height="1" fill="#FFFFFF" />
<rect x="985" y="595" width="37" height="11" fill="#0A820A" />
<text x="989" y="604" font-size="9.6" fill="#000000" font-weight="normal" textLength="31" lengthAdjust="spacingAndGlyphs" >1.35718</text>
<rect x="5" y="678" width="1" height="3" fill="#FFFFFF" />
<text x="3" y="690" font-size="9.6" fill="#FFFFFF" font-weight="normal" textLength="44" lengthAdjust="spacingAndGlyphs" >7 Jan 2009</text>
<rect x="69" y="678" width="1" height="3" fill="#FFFFFF" />
<text x="68" y="690" font-size="9.6" fill="#FFFFFF" font-weight="normal" textLength="47" lengthAdjust="spacingAndGlyphs" >7 Jan 20:55</text>
<rect x="133" y="678" width="1" height="3" fill="#FFFFFF" />
<text x="132" y="690" font-size="9.6" fill="#FFFFFF" font-weight="normal" textLength="47" lengthAdjust="spacingAndGlyphs" >7 Jan 21:27</text>
<rect x="197" y="678" width="1" height="3" fill="#FFFFFF" />
<text x="196" y="690" font-size="9.6" fill="#FFFFFF" font-weight="normal" textLength="47" lengthAdjust="spacingAndGlyphs" >7 Jan 22:00</text>
<rect x="261" y="678" width="1" height="3" fill="#FFFFFF" />
<text x="260" y="690" font-size="9.6" fill="#FFFFFF" font-weight="normal" textLength="47" lengthAdjust="spacingAndGlyphs" >7 Jan 22:32</text>
<rect x="325" y="678" width="1" height="3" fill="#FFFFFF" />
<text x="324" y="690" font-size="9.6" fill="#FFFFFF" font-weight="normal" textLength="47" lengthAdjust="spacingAndGlyphs" >7 Jan 23:04</text>
<rect x="389" y="678" width="1" height="3" fill="#FFFFFF" />
<text x="388" y="690" font-size="9.6" fill="#FFFFFF" font-weight="normal" textLength="47" lengthAdjust="spacingAndGlyphs" >7 Jan 23:37</text>
<rect x="453" y="678" width="1" height="3" fill="#FFFFFF" />
<text x="452" y="690" font-size="9.6" fill="#FFFFFF" font-weight="normal" textLength="47" lengthAdjust="spacingAndGlyphs" >8 Jan 00:09</text>
<rect x="517" y="678" width="1" height="3" fill="#FFFFFF" />
<text x="516" y="690" font-size="9.6" fill="#FFFFFF" font-weight="normal" textLength="47" lengthAdjust="spacingAndGlyphs" >8 Jan 00:41</text>
<rect x="581" y="678" width="1" height="3" fill="#FFFFFF" />
<text x="580" y="690" font-size="9.6" fill="#FFFFFF" font-weight="normal" textLength="47" lengthAdjust="spacingAndGlyphs" >8 Jan 01:13</text>
<rect x="2" y="695" width="1020" height="2" fill="#FFFFFF" />
<rect x="0" y="697" width="1024" height="1" fill="#000000" />
<path d="M4.5 697 V715.5 H83.5 V697" fill="#FFFFFF" stroke="#000000"/>
<rect x="5" y="697" width="78" height="1" fill="#FFFFFF" />
<text x="15" y="710" font-size="10" fill="#000" font-weight="normal" textLength="56" lengthAdjust="spacingAndGlyphs" >EURUSD,M1</text>
<text x="93" y="710" font-size="10" fill="#8A8A80" font-weight="normal" textLength="55" lengthAdjust="spacingAndGlyphs" >USDJPY,M1</text>
<rect x="160" y="701" width="1" height="12" fill="#808078" />
<path d="M995.5 707 l3.5 -3.5 v7z" fill="#8A8A7A"/><path d="M1016.5 707 l-3.5 -3.5 v7z" fill="#8A8A7A"/>
<rect x="0" y="717" width="1024" height="1" fill="#F8F7F0" />
<text x="2" y="733" font-size="10" fill="#000" font-weight="normal" textLength="86" lengthAdjust="spacingAndGlyphs" >For Help, press F1</text>
<rect x="303" y="722" width="1" height="16" fill="#B0AD9C" />
<rect x="304" y="722" width="1" height="16" fill="#FFFFFF" />
<rect x="412" y="722" width="1" height="16" fill="#B0AD9C" />
<rect x="413" y="722" width="1" height="16" fill="#FFFFFF" />
<rect x="513" y="722" width="1" height="16" fill="#B0AD9C" />
<rect x="514" y="722" width="1" height="16" fill="#FFFFFF" />
<rect x="584" y="722" width="1" height="16" fill="#B0AD9C" />
<rect x="585" y="722" width="1" height="16" fill="#FFFFFF" />
<rect x="657" y="722" width="1" height="16" fill="#B0AD9C" />
<rect x="658" y="722" width="1" height="16" fill="#FFFFFF" />
<rect x="726" y="722" width="1" height="16" fill="#B0AD9C" />
<rect x="727" y="722" width="1" height="16" fill="#FFFFFF" />
<rect x="796" y="722" width="1" height="16" fill="#B0AD9C" />
<rect x="797" y="722" width="1" height="16" fill="#FFFFFF" />
<rect x="863" y="722" width="1" height="16" fill="#B0AD9C" />
<rect x="864" y="722" width="1" height="16" fill="#FFFFFF" />
<text x="308.5" y="733" font-size="11" fill="#000" font-weight="normal" textLength="34" lengthAdjust="spacingAndGlyphs" >Default</text>
<text x="418" y="733" font-size="11" fill="#000" font-weight="normal" textLength="86" lengthAdjust="spacingAndGlyphs" >2009.01.08 00:56</text>
<text x="518.5" y="733" font-size="11" fill="#000" font-weight="normal" textLength="54" lengthAdjust="spacingAndGlyphs" >O: 1.35779</text>
<text x="589.5" y="733" font-size="11" fill="#000" font-weight="normal" textLength="54" lengthAdjust="spacingAndGlyphs" >H: 1.35797</text>
<text x="661" y="733" font-size="11" fill="#000" font-weight="normal" textLength="52" lengthAdjust="spacingAndGlyphs" >L: 1.35755</text>
<text x="731" y="733" font-size="11" fill="#000" font-weight="normal" textLength="53" lengthAdjust="spacingAndGlyphs" >C: 1.35768</text>
<text x="801" y="733" font-size="11" fill="#000" font-weight="normal" textLength="25" lengthAdjust="spacingAndGlyphs" >V: 41</text>
<text x="915.5" y="733" font-size="11" fill="#000" font-weight="normal" textLength="48" lengthAdjust="spacingAndGlyphs" >6263/9 kb</text>
<rect x="868" y="723" width="2" height="11" fill="#6A8A18" />
<rect x="868" y="734" width="2" height="1" fill="#183A50" />
<rect x="871" y="723" width="2" height="10" fill="#6A8A18" />
<rect x="871" y="733" width="2" height="2" fill="#183A50" />
<rect x="874" y="723" width="2" height="9" fill="#6A8A18" />
<rect x="874" y="732" width="2" height="3" fill="#183A50" />
<rect x="877" y="723" width="2" height="8" fill="#6A8A18" />
<rect x="877" y="731" width="2" height="4" fill="#183A50" />
<rect x="880" y="723" width="2" height="6" fill="#6A8A18" />
<rect x="880" y="729" width="2" height="6" fill="#183A50" />
<rect x="883" y="723" width="2" height="5" fill="#6A8A18" />
<rect x="883" y="728" width="2" height="7" fill="#183A50" />
<rect x="886" y="723" width="2" height="4" fill="#6A8A18" />
<rect x="886" y="727" width="2" height="8" fill="#183A50" />
<rect x="889" y="723" width="2" height="2" fill="#6A8A18" />
<rect x="889" y="725" width="2" height="10" fill="#183A50" />
<g shape-rendering="auto"><path d="M1009 738.5 L1024.5 723 M1013 738.5 L1024.5 727 M1017 738.5 L1024.5 731" stroke="#9A9788" stroke-width="1.3"/><path d="M1010.5 738.5 L1024.5 724.5 M1014.5 738.5 L1024.5 728.5 M1018.5 738.5 L1024.5 732.5" stroke="#FFFFFF" stroke-width="1"/></g>
<rect x="0" y="738" width="1024" height="1" fill="#3D78D8" />
<rect x="0" y="739" width="1024" height="3" fill="#2E63C8" />
<rect x="794" y="739" width="55" height="3" fill="#E0F0FF" />
<rect x="849" y="739" width="46" height="3" fill="#3070E0" />
<rect x="895" y="739" width="129" height="3" fill="#20A0F0" />
<rect x="0" y="739" width="95" height="3" fill="#3A9A3A" />
</svg></body></html>
